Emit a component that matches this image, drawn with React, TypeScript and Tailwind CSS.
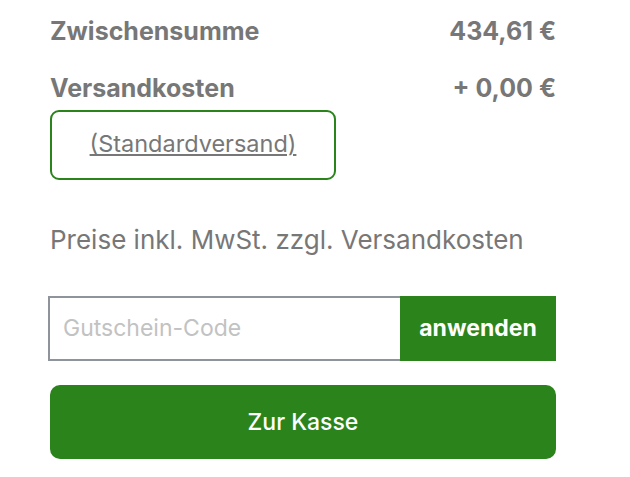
import React from "react";

export default function App() {
    return (
        <div className="w-[630px] h-[477px] bg-white font-['Inter',sans-serif] text-[#777]">
            <div className="ml-[50px] w-[506px] pt-[14px]">
                <div className="flex justify-between items-center h-[36px]">
                    <span className="text-[25px] font-bold">Zwischensumme</span>
                    <span className="text-[25px] font-bold">434,61 €</span>
                </div>
                <div className="flex justify-between items-center h-[36px] mt-[21px]">
                    <span className="text-[25px] font-bold">Versandkosten</span>
                    <span className="text-[25px] font-bold">+ 0,00 €</span>
                </div>
                <div className="mt-[3px] w-[286px] h-[70px] border-2 border-[#2b831c] rounded-[9px] flex items-center justify-center">
                    <a href="#" className="text-[23.5px] underline underline-offset-2 -mt-[2px]">
                        (Standardversand)
                    </a>
                </div>
                <p className="mt-[42px] text-[26px] leading-[36px]">Preise inkl. MwSt. zzgl. Versandkosten</p>
                <div className="mt-[38px] -ml-[2px] flex h-[65px]">
                    <input
                        type="text"
                        placeholder="Gutschein-Code"
                        className="flex-1 min-w-0 border-2 border-r-0 border-[#8f949c] px-[13px] text-[23px] outline-none placeholder:text-[#c2c2c2]"
                    />
                    <button
                        type="button"
                        className="w-[156px] bg-[#2b831c] text-white text-[23px] font-bold"
                    >
                        anwenden
                    </button>
                </div>
                <button
                    type="button"
                    className="mt-[24px] w-full h-[74px] rounded-[10px] bg-[#2b831c] text-white text-[23px] font-medium"
                >
                    Zur Kasse
                </button>
            </div>
        </div>
    );
}
